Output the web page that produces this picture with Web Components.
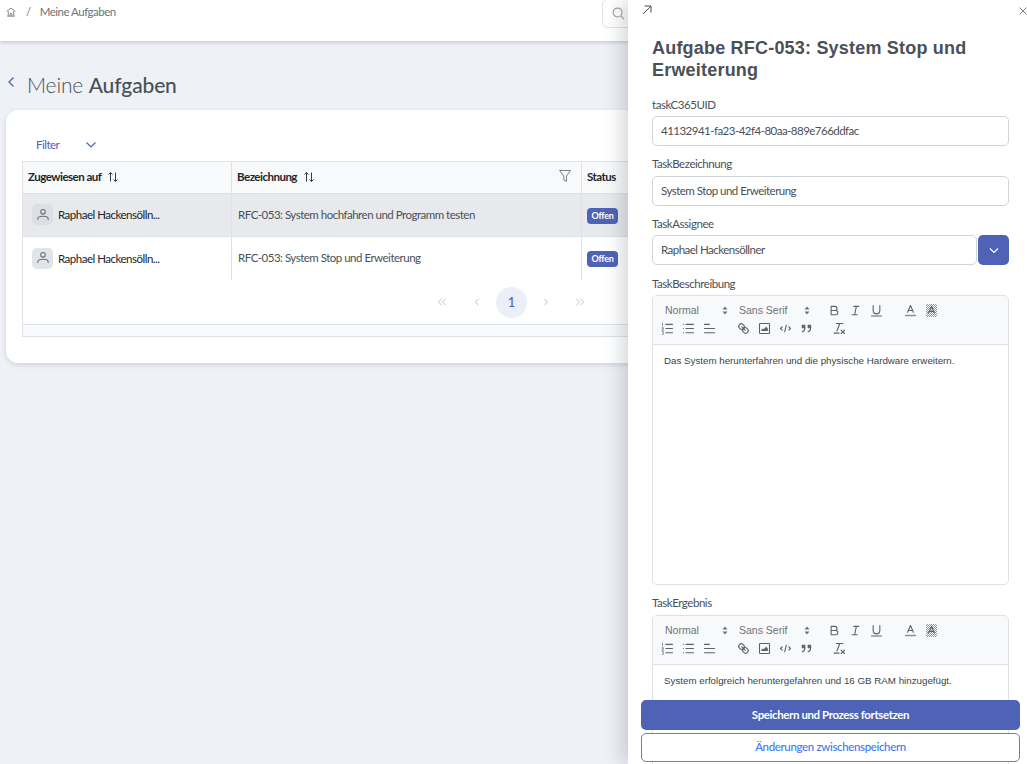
<!DOCTYPE html>
<html lang="de">
<head>
<meta charset="utf-8">
<title>Meine Aufgaben</title>
<style>
    html, body { margin: 0; height: 764px; overflow: hidden; background: #eef1f6; }
    body { font-family: Lato, "Liberation Sans", sans-serif; }
</style>
</head>
<body>
<app-header></app-header>
<page-title></page-title>
<task-table></task-table>
<task-drawer></task-drawer>

<script>
//ICONS (quill toolbar + the few page icons)

const toolbarIcons = {
    bold: `<path d="M5,4H9.5A2.5,2.5,0,0,1,12,6.5v0A2.5,2.5,0,0,1,9.5,9H5V4Z"/><path d="M5,9h5.5A2.5,2.5,0,0,1,13,11.5v0A2.5,2.5,0,0,1,10.5,14H5V9Z"/>`,
    italic: `<path d="M7 4H13M5 14H11M8 14L10 4"/>`,
    underline: `<path d="M5,3V9a4,4,0,0,0,4,4h0a4,4,0,0,0,4-4V3"/><path d="M3 15.5H15"/>`,
    color: `<path d="M5.5 11L9 3L12.5 11M11.6 9H6.4"/><path d="M3 15H15" stroke-width="1.6" stroke="#8b9096"/>`,
    background: `<rect x="2.4" y="1.2" width="13.2" height="15.6" fill="url(#dots)" stroke="none"/><path d="M5.5 12L9 4L12.5 12M11.6 10H6.4"/>`,
    ordered: `<path d="M7 4H15M7 9H15M7 14H15"/><path d="M3 2.5V6M2.5 8H4V9.5H2.5V11H4M2.5 12.5H4V16H2.5" stroke-width=".8"/>`,
    bullet: `<path d="M6 4H15M6 9H15M6 14H15M3 4H3.1M3 9H3.1M3 14H3.1"/>`,
    align: `<path d="M3 4H9M3 9H15M3 14H15"/>`,
    link: `<path d="M7 7L11 11"/><path d="M8.9,4.577a3.476,3.476,0,0,1,.36,4.679A3.476,3.476,0,0,1,4.577,8.9C3.185,7.5,2.035,6.4,4.217,4.217S7.5,3.185,8.9,4.577Z"/><path d="M13.423,9.1a3.476,3.476,0,0,0-4.679-.36,3.476,3.476,0,0,0,.36,4.679c1.392,1.392,2.5,2.542,4.679.36S14.815,10.5,13.423,9.1Z"/>`,
    image: `<rect x="3" y="3" width="12" height="12" rx="1"/><path d="M5 12V11L7 9L8 10L11 7L13 9V12Z" fill="#5c6268" stroke="none"/>`,
    code: `<path d="M5 7L3 9L5 11M13 7L15 9L13 11M10 5L8 13"/>`,
    quote: `<rect x="4" y="5" width="3" height="3" fill="#5c6268"/><rect x="11" y="5" width="3" height="3" fill="#5c6268"/><path d="M7,8c0,4.031-3,5-3,5M14,8c0,4.031-3,5-3,5"/>`,
    clean: `<path d="M5 3H13M6 12L9.35 3M11 11L15 15M15 11L11 15M2.5 14.5H8.5"/>`
};

function toolbarIcon(name) {
    return `<svg viewBox="0 0 18 18" width="15" height="15" fill="none" stroke="#5c6268" stroke-width="1.300" stroke-linecap="round" stroke-linejoin="round">${toolbarIcons[name]}</svg>`;
}

//HEADER

class AppHeader extends HTMLElement {
    constructor() {
        super();
        this.attachShadow({ mode: "open" });
        this.shadowRoot.innerHTML = `
        <style>
            :host { display: flex; align-items: flex-start; height: 41px; background: #fff; box-shadow: 0 1px 4px rgba(60, 70, 90, .28); position: relative; }
            .crumbs { display: flex; align-items: center; height: 23px; padding-left: 6px; font-size: 11.5px; letter-spacing: -.5px; color: #6c757d; }
            .sep { margin: 0 9px 0 10px; }
            .search { margin-left: auto; width: 425px; height: 29px; margin-top: -1px; box-sizing: border-box; border: 1px solid #dfe3e8; border-radius: 6px; padding: 7px 9px; }
            svg { display: block; }
        </style>
        <div class="crumbs">
            <svg width="10" height="10" viewBox="0 0 12 12" fill="none" stroke="#6c757d" stroke-width="1"><path d="M.7 5.2L6 1.4L11.3 5.2M1.5 11H10.500M2.700 5V11M9.300 5V11M5 11V7.500H7V11"/></svg>
            <span class="sep">/</span>
            <span>Meine Aufgaben</span>
        </div>
        <div class="search">
            <svg width="13" height="13" viewBox="0 0 14 14" fill="none" stroke="#9aa0a6" stroke-width="1.2"><circle cx="6" cy="6" r="4.800"/><path d="M9.600 9.600L13 13"/></svg>
        </div>`;
    }
}
customElements.define("app-header", AppHeader);

//PAGE TITLE

class PageTitle extends HTMLElement {
    constructor() {
        super();
        this.attachShadow({ mode: "open" });
        this.shadowRoot.innerHTML = `
        <style>
            :host { display: flex; align-items: center; height: 28px; padding: 30px 0 11px 7px; color: #495057; }
            svg { margin-top: -6px; }
            h1 { margin: 0 0 0 11px; font-size: 21px; font-weight: 300; line-height: 28px; letter-spacing: -.15px; }
            b { font-weight: 500; }
        </style>
        <svg width="9" height="12" viewBox="0 0 9 12" fill="none" stroke="#4e63b6" stroke-width="1.300"><path d="M6.500 1.500L2 6L6.500 10.500"/></svg>
        <h1>Meine <b>Aufgaben</b></h1>`;
    }
}
customElements.define("page-title", PageTitle);

//TABLE

const tasks = [
    { assignee: "Raphael Hackensölln...", name: "RFC-053: System hochfahren und Programm testen", status: "Offen", selected: true },
    { assignee: "Raphael Hackensölln...", name: "RFC-053: System Stop und Erweiterung", status: "Offen" }
];

const sortIcon = `<svg width="12" height="12" viewBox="0 0 12 12" fill="none" stroke="#343a40" stroke-width="1"><path d="M3.500 10.500V1.500M1.500 3.500L3.500 1.500L5.500 3.500M8.500 1.500V10.500M6.500 8.500L8.500 10.500L10.500 8.500"/></svg>`;

function pagerIcon(path) {
    return `<svg width="10" height="8" viewBox="0 0 12 10" fill="none" stroke="#b5bac0" stroke-width="1.100"><path d="${path}"/></svg>`;
}

class TaskTable extends HTMLElement {
    constructor() {
        super();
        this.attachShadow({ mode: "open" });
    }

    connectedCallback() {
        const rows = tasks.map(task => `
            <div class="row ${task.selected ? "selected" : ""}">
                <div class="cell person">
                    <span class="avatar"><svg width="14" height="14" viewBox="0 0 14 14" fill="none" stroke="#6c757d" stroke-width="1.100"><circle cx="7" cy="3.800" r="2.300"/><path d="M1.800 12V11C1.800 9 4 8.300 7 8.300S12.200 9 12.200 11V12"/></svg></span>
                    <span>${task.assignee}</span>
                </div>
                <div class="cell title">${task.name}</div>
                <div class="cell" style="padding-left:5px"><span class="badge">${task.status}</span></div>
            </div>`).join("");

        this.shadowRoot.innerHTML = `
        <style>
            :host { display: block; margin: 0 6px; height: 253px; padding: 51px 16px 0; box-sizing: border-box; background: #fff; border-radius: 12px; box-shadow: 0 2px 5px rgba(60, 70, 90, .16); position: relative; font-size: 11.5px; letter-spacing: -.5px; }
            .filter { position: absolute; left: 30px; top: 27px; display: flex; align-items: center; gap: 26px; color: #4e63b6; line-height: 16px; }
            .table { border: 1px solid #dee2e6; border-right: 0; }
            .row { display: grid; grid-template-columns: 209px 350px 1fr; height: 43px; border-bottom: 1px solid #dee2e6; box-sizing: border-box; }
            .row.head { height: 32px; background: #f8f9fa; font-weight: 700; color: #343a40; }
            .row.selected { background: #e7e9ec; }
            .row:nth-child(3) { border-bottom: 0; }
            .cell { display: flex; align-items: center; padding: 0 5px 2px 6px; border-right: 1px solid #dee2e6; color: #495057; white-space: nowrap; }
            .head .cell { color: #212529; gap: 6px; padding-left: 5px; }
            .head .filter-icon { margin-left: auto; margin-right: 4px; margin-top: -2px; }
            .person { padding-left: 9px; padding-bottom: 1px; gap: 5px; color: #212529; }
            .avatar { width: 21px; height: 21px; border-radius: 5px; background: #e1e4e8; display: flex; align-items: center; justify-content: center; }
            .row.selected .avatar { background: #dcdfe3; }
            .badge { background: #4e63b6; color: #fff; font-size: 9px; font-weight: 700; letter-spacing: -.3px; padding: 2px 4.500px; border-radius: 4px; line-height: 12px; margin-top: 3px; }
            .pager { display: flex; align-items: center; height: 45px; padding-left: 401px; border-bottom: 1px solid #dee2e6; box-sizing: border-box; }
            .pager span { width: 35px; height: 31px; display: flex; align-items: center; justify-content: center; }
            .pager .current { width: 31px; margin: 0 2px; border-radius: 50%; background: #eceff8; color: #4e63b6; font-size: 13px; font-weight: 500; letter-spacing: 0; }
            .pager .current + span { margin-left: -1px; }
            .pager span:last-child { margin-left: -1px; }
            .scroll { height: 11px; background: #f8f9fa; }
        </style>
        <div class="filter">
            <span>Filter</span>
            <svg width="12" height="8" viewBox="0 0 12 8" fill="none" stroke="#4e63b6" stroke-width="1.200"><path d="M1.500 1.500L6 6L10.500 1.500"/></svg>
        </div>
        <div class="table">
            <div class="row head">
                <div class="cell"><span>Zugewiesen auf</span>${sortIcon}</div>
                <div class="cell"><span>Bezeichnung</span>${sortIcon}
                    <svg class="filter-icon" width="14" height="14" viewBox="0 0 14 14" fill="none" stroke="#7a8087" stroke-width="1"><path d="M1.500 1.500H12.500L8.500 7V12.500L5.800 11V7Z"/></svg>
                </div>
                <div class="cell">Status</div>
            </div>
            ${rows}
            <div class="pager">
                <span>${pagerIcon("M5.500 1L1.500 5L5.500 9M10.500 1L6.500 5L10.500 9")}</span>
                <span>${pagerIcon("M8 1L4 5L8 9")}</span>
                <span class="current">1</span>
                <span>${pagerIcon("M4 1L8 5L4 9")}</span>
                <span>${pagerIcon("M1.500 1L5.500 5L1.500 9M6.500 1L10.500 5L6.500 9")}</span>
            </div>
            <div class="scroll"></div>
        </div>`;
    }
}
customElements.define("task-table", TaskTable);

//DRAWER PARTS

class FormField extends HTMLElement {
    constructor() {
        super();
        this.attachShadow({ mode: "open" });
        this.shadowRoot.innerHTML = `
        <style>
            :host { display: block; color: #495057; }
            label { display: block; font-size: 11.5px; letter-spacing: -.45px; line-height: 16px; margin-bottom: var(--label-gap, 3px); }
        </style>
        <label></label>
        <slot></slot>`;
    }

    connectedCallback() {
        this.shadowRoot.querySelector("label").textContent = this.getAttribute("label");
    }
}
customElements.define("form-field", FormField);

class TextBox extends HTMLElement {
    constructor() {
        super();
        this.attachShadow({ mode: "open" });
        this.shadowRoot.innerHTML = `
        <style>
            :host { display: flex; align-items: center; flex: 1; height: 30px; box-sizing: border-box; padding: 0 8px 2px; background: #fff; border: 1px solid #ced4da; border-radius: 5px; font-size: 11.5px; letter-spacing: -.52px; color: #495057; white-space: nowrap; }
        </style>
        <slot></slot>`;
    }
}
customElements.define("text-box", TextBox);

class SelectBox extends HTMLElement {
    constructor() {
        super();
        this.attachShadow({ mode: "open" });
        this.shadowRoot.innerHTML = `
        <style>
            :host { display: flex; }
            button { width: 31px; height: 30px; margin-left: 1px; padding: 0; background: #4e63b6; border: 0; border-radius: 5px; display: flex; align-items: center; justify-content: center; }
        </style>
        <text-box><slot></slot></text-box>
        <button><svg width="10" height="7" viewBox="0 0 10 7" fill="none" stroke="#fff" stroke-width="1.200"><path d="M1 1.500L5 5.500L9 1.500"/></svg></button>`;
    }
}
customElements.define("select-box", SelectBox);

class RichEditor extends HTMLElement {
    constructor() {
        super();
        this.attachShadow({ mode: "open" });
        const button = (name, extra = 0) => `<span class="btn" style="margin-left:${extra}px">${toolbarIcon(name)}</span>`;
        this.shadowRoot.innerHTML = `
        <style>
            :host { display: block; border: 1px solid #dee2e6; border-radius: 5px; background: #fff; font-family: "Liberation Sans", Arial, sans-serif; overflow: hidden; }
            .toolbar { height: 49px; box-sizing: border-box; padding-top: 5px; background: #f8f9fa; border-bottom: 1px solid #dee2e6; }
            .line { display: flex; align-items: center; height: 18px; padding-left: 4px; }
            .picker { display: flex; align-items: center; justify-content: space-between; box-sizing: border-box; padding-left: 8px; font-size: 10.500px; color: #6c7278; height: 18px; }
            .btn { width: 21px; height: 18px; display: flex; align-items: center; justify-content: center; flex: none; }
            .content { padding: 9px 11px; font-size: 9.750px; line-height: 14px; color: #3c4248; }
            svg { display: block; }
            .hidden-defs { position: absolute; width: 0; height: 0; }
        </style>
        <svg class="hidden-defs"><defs><pattern id="dots" width="2.400" height="2.400" patternUnits="userSpaceOnUse"><rect width="1.200" height="1.200" fill="#8f959b"/><rect x="1.200" y="1.200" width="1.200" height="1.200" fill="#8f959b"/></pattern></defs></svg>
        <div class="toolbar">
            <div class="line">
                <span class="picker" style="width:74px;padding-right:3px">Normal ${this.arrows()}</span>
                <span class="picker" style="width:85px;padding-right:6px;margin-right:8px">Sans Serif ${this.arrows()}</span>
                ${button("bold")}${button("italic")}${button("underline")}
                ${button("color", 13)}${button("background")}
            </div>
            <div class="line">
                ${button("ordered")}${button("bullet")}${button("align")}
                ${button("link", 13)}${button("image")}${button("code")}${button("quote")}
                ${button("clean", 12)}
            </div>
        </div>
        <div class="content"><slot></slot></div>`;
    }

    arrows() {
        return `<svg width="6" height="9" viewBox="0 0 6 9" fill="#6c7278"><path d="M3 .5L5.500 3.500H.5ZM3 8.500L.5 5.500H5.500Z"/></svg>`;
    }
}
customElements.define("rich-editor", RichEditor);

//DRAWER

class TaskDrawer extends HTMLElement {
    constructor() {
        super();
        this.attachShadow({ mode: "open" });
        this.shadowRoot.innerHTML = `
        <style>
            :host { position: absolute; top: 0; right: 0; bottom: 0; width: 399px; background: #fff; box-shadow: -6px 0 18px rgba(40, 50, 70, .2); overflow: hidden; }
            .top { display: flex; justify-content: space-between; align-items: flex-start; padding: 5px 0 0 14px; height: 10px; }
            .close { margin-top: 2px; }
            .body { display: flex; flex-direction: column; padding: 22px 18px 0 24px; }
            h2 { margin: 0 0 16px; font: bold 18px/22px "Liberation Sans", Arial, sans-serif; letter-spacing: .2px; color: #495057; }
            form-field + form-field { margin-top: 10px; }
            .actions { position: absolute; left: 13px; right: 7px; bottom: 2px; display: flex; flex-direction: column; gap: 3px; }
            button { height: 30px; border-radius: 5px; font: 700 11.500px Lato, "Liberation Sans", sans-serif; letter-spacing: -.4px; padding: 0 0 2px; }
            .primary { background: #4e63b6; color: #fff; border: 0; }
            .secondary { height: 29px; background: #fff; color: #3f78f0; border: 1px solid #4d80f0; font-weight: 500; letter-spacing: -.36px; }
            svg { display: block; }
        </style>
        <div class="top">
            <svg width="10" height="10" viewBox="0 0 10 10" fill="none" stroke="#495057" stroke-width="1"><path d="M1 9L9 1M2.500 1H9V7.500"/></svg>
            <svg class="close" width="8" height="8" viewBox="0 0 8 8" fill="none" stroke="#6c757d" stroke-width=".9"><path d="M.5 .5L7.500 7.500M7.500 .5L.5 7.500"/></svg>
        </div>
        <div class="body">
            <h2>Aufgabe RFC-053: System Stop und Erweiterung</h2>
            <form-field label="taskC365UID"><text-box>41132941-fa23-42f4-80aa-889e766ddfac</text-box></form-field>
            <form-field label="TaskBezeichnung" style="--label-gap:4px"><text-box>System Stop und Erweiterung</text-box></form-field>
            <form-field label="TaskAssignee"><select-box>Raphael Hackensöllner</select-box></form-field>
            <form-field label="TaskBeschreibung" style="margin-top:11px"><rich-editor style="height:290px;box-sizing:border-box">Das System herunterfahren und die physische Hardware erweitern.</rich-editor></form-field>
            <form-field label="TaskErgebnis" style="--label-gap:4px"><rich-editor style="height:200px;box-sizing:border-box">System erfolgreich heruntergefahren und 16 GB RAM hinzugefügt.</rich-editor></form-field>
        </div>
        <div class="actions">
            <button class="primary">Speichern und Prozess fortsetzen</button>
            <button class="secondary">Änderungen zwischenspeichern</button>
        </div>`;
    }
}
customElements.define("task-drawer", TaskDrawer);
</script>
</body>
</html>
